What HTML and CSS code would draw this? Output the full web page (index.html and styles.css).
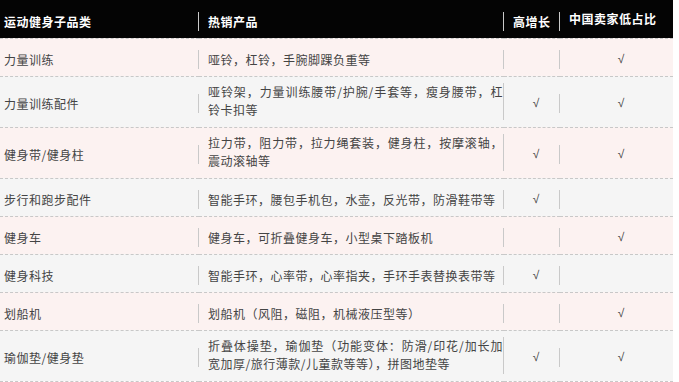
FILE: index.html
```html
<!DOCTYPE html>
<html lang="zh">
<head>
<meta charset="utf-8">
<link rel="stylesheet" href="styles.css">
</head>
<body>
<table class="tbl">
  <colgroup>
    <col class="w1"><col class="w2"><col class="w3"><col class="w4">
  </colgroup>
  <thead>
    <tr>
      <th><div class="c first">运动健身子品类</div></th>
      <th><div class="c txt">热销产品</div></th>
      <th><div class="c">高增长</div></th>
      <th><div class="c last up">中国卖家低占比</div></th>
    </tr>
  </thead>
  <tbody>
    <tr class="pink">
      <td><div class="c first">力量训练</div></td>
      <td><div class="c txt">哑铃，杠铃，手腕脚踝负重等</div></td>
      <td><div class="c mk"></div></td>
      <td><div class="c last mk">√</div></td>
    </tr>
    <tr class="gray tall">
      <td><div class="c first">力量训练配件</div></td>
      <td><div class="c txt two">哑铃架，力量训练腰带/护腕/手套等，瘦身腰带，杠铃卡扣等</div></td>
      <td><div class="c mk">√</div></td>
      <td><div class="c last mk">√</div></td>
    </tr>
    <tr class="pink tall">
      <td><div class="c first">健身带/健身柱</div></td>
      <td><div class="c txt two">拉力带，阻力带，拉力绳套装，健身柱，按摩滚轴，震动滚轴等</div></td>
      <td><div class="c mk">√</div></td>
      <td><div class="c last mk">√</div></td>
    </tr>
    <tr class="gray">
      <td><div class="c first">步行和跑步配件</div></td>
      <td><div class="c txt">智能手环，腰包手机包，水壶，反光带，防滑鞋带等</div></td>
      <td><div class="c mk">√</div></td>
      <td><div class="c last mk"></div></td>
    </tr>
    <tr class="pink">
      <td><div class="c first">健身车</div></td>
      <td><div class="c txt">健身车，可折叠健身车，小型桌下踏板机</div></td>
      <td><div class="c mk"></div></td>
      <td><div class="c last mk">√</div></td>
    </tr>
    <tr class="gray">
      <td><div class="c first">健身科技</div></td>
      <td><div class="c txt">智能手环，心率带，心率指夹，手环手表替换表带等</div></td>
      <td><div class="c mk">√</div></td>
      <td><div class="c last mk"></div></td>
    </tr>
    <tr class="pink">
      <td><div class="c first">划船机</div></td>
      <td><div class="c txt">划船机（风阻，磁阻，机械液压型等）</div></td>
      <td><div class="c mk"></div></td>
      <td><div class="c last mk">√</div></td>
    </tr>
    <tr class="gray tall">
      <td><div class="c first">瑜伽垫/健身垫</div></td>
      <td><div class="c txt two">折叠体操垫，瑜伽垫（功能变体：防滑/印花/加长加宽加厚/旅行薄款/儿童款等等），拼图地垫等</div></td>
      <td><div class="c mk">√</div></td>
      <td><div class="c last mk">√</div></td>
    </tr>
  </tbody>
</table>
</body>
</html>
```

FILE: styles.css
```css
html, body {
  margin: 0;
  padding: 0;
  background: #ffffff;
}

body {
  font-family: "Noto Sans CJK SC", "Noto Sans", sans-serif;
  font-size: 12px;
  letter-spacing: 0.5px;
  color: #444444;
}

.tbl {
  width: 673px;
  border-collapse: collapse;
  table-layout: fixed;
}

.w1 { width: 199px; }
.w2 { width: 305px; }
.w3 { width: 56px; }
.w4 { width: 113px; }

.tbl th,
.tbl td {
  box-sizing: border-box;
  padding: 0;
  vertical-align: middle;
  text-align: left;
}

.tbl thead tr {
  background: #040404;
  color: #ffffff;
}

.tbl thead th {
  height: 38px;
  font-weight: bold;
  border-bottom: 1px dashed #c8c8c8;
}

.tbl thead .c {
  margin-top: 6px;
  line-height: 19px;
}

.tbl thead .c.up {
  margin-top: 0;
}

.tbl tbody td {
  height: 38px;
  padding: 6px 0 5px;
  border-bottom: 1px dashed #c8c8c8;
}

.tbl tbody tr.tall td {
  padding: 6px 0 7px;
}

.pink { background: #fcf2f1; }
.gray { background: #f5f5f5; }

.c {
  border-right: 1px solid #c9c9c9;
  padding-left: 9px;
  line-height: 19px;
  min-height: 19px;
  margin-top: 4px;
}

.c.first {
  padding-left: 4px;
}

.c.last {
  border-right: 0;
}

.txt {
  text-align: justify;
}

.txt.two {
  line-height: 18.5px;
  margin-top: 0;
}

.mk {
  text-align: center;
  font-family: "Liberation Sans", Arial, sans-serif;
  letter-spacing: 0;
}
```
